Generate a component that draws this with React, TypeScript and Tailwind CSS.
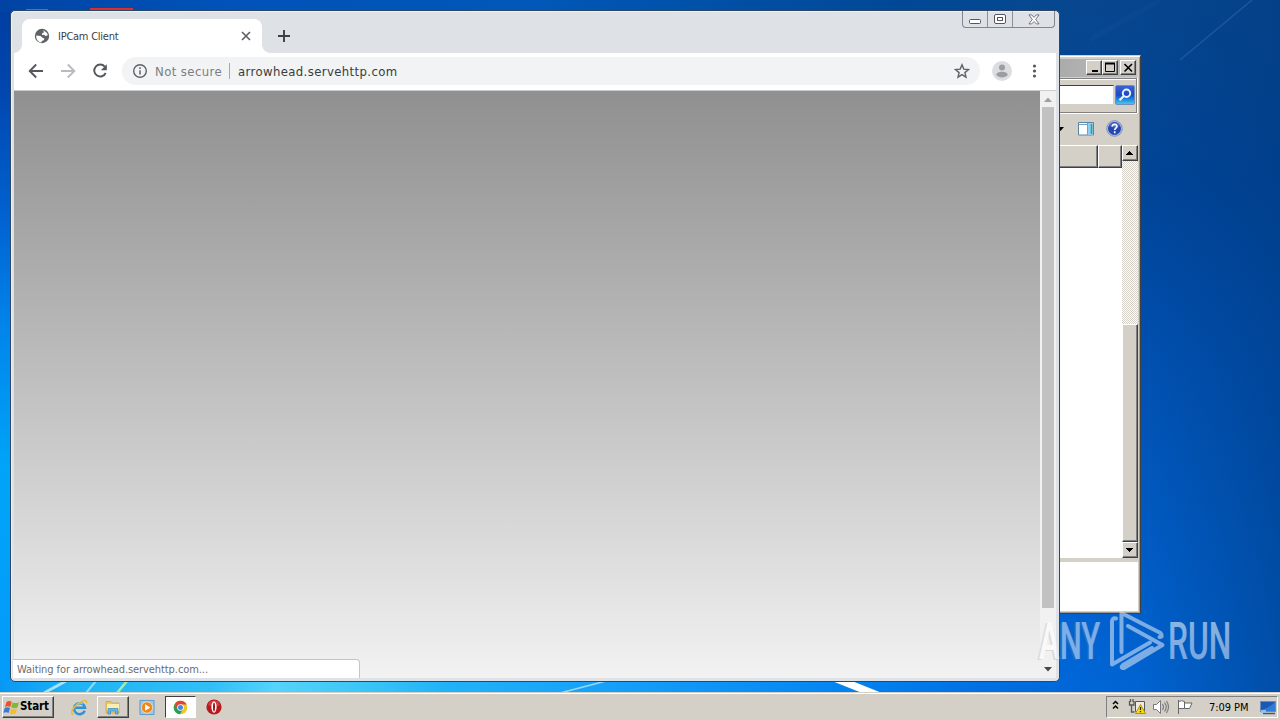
import type { ReactNode } from 'react';

const RAISED =
  'border border-t-white border-l-white border-r-[#404040] border-b-[#404040] bg-[#d4d0c8] shadow-[inset_-1px_-1px_0_#808080]';

function Wallpaper() {
  return (
    <svg className="absolute inset-0" width="1280" height="720" viewBox="0 0 1280 720">
      <defs>
        <linearGradient id="leftEdge" x1="0" y1="0" x2="0" y2="1">
          <stop offset="0" stopColor="#003da0" />
          <stop offset="0.12" stopColor="#0046ae" />
          <stop offset="0.3" stopColor="#0062d0" />
          <stop offset="0.45" stopColor="#0084ea" />
          <stop offset="0.65" stopColor="#00a4f8" />
          <stop offset="1" stopColor="#0499fa" />
        </linearGradient>
        <linearGradient id="topEdge" x1="0" y1="0" x2="1" y2="0">
          <stop offset="0" stopColor="#0043a4" />
          <stop offset="0.2" stopColor="#0052b8" />
          <stop offset="0.5" stopColor="#0058b8" />
          <stop offset="0.85" stopColor="#004896" />
          <stop offset="1" stopColor="#07478f" />
        </linearGradient>
        <linearGradient id="rightEdge" x1="0" y1="0" x2="0" y2="1">
          <stop offset="0" stopColor="#07478f" />
          <stop offset="0.25" stopColor="#00459a" />
          <stop offset="0.5" stopColor="#0053b6" />
          <stop offset="0.75" stopColor="#005fcb" />
          <stop offset="1" stopColor="#0069dc" />
        </linearGradient>
        <linearGradient id="rightShade" x1="0" y1="0" x2="1" y2="0">
          <stop offset="0" stopColor="#003a80" stopOpacity="0" />
          <stop offset="0.35" stopColor="#003a80" stopOpacity="0.08" />
          <stop offset="1" stopColor="#003a80" stopOpacity="0.55" />
        </linearGradient>
        <linearGradient id="bottomEdge" x1="0" y1="0" x2="1" y2="0">
          <stop offset="0" stopColor="#0898f4" />
          <stop offset="0.07" stopColor="#1fb4f4" />
          <stop offset="0.2" stopColor="#32bff8" />
          <stop offset="0.26" stopColor="#55d3fb" />
          <stop offset="0.34" stopColor="#3cc6f6" />
          <stop offset="0.42" stopColor="#22b2f8" />
          <stop offset="0.6" stopColor="#149df8" />
          <stop offset="0.78" stopColor="#0586f2" />
          <stop offset="0.9" stopColor="#0074e6" />
          <stop offset="1" stopColor="#0068da" />
        </linearGradient>
      </defs>
      <rect width="600" height="720" fill="url(#leftEdge)" />
      <rect x="600" width="680" height="720" fill="url(#rightEdge)" />
      <rect x="1060" width="220" height="720" fill="url(#rightShade)" />
      <rect width="1060" height="12" fill="url(#topEdge)" />
      <rect y="681" width="1060" height="12" fill="url(#bottomEdge)" />
      <path d="M1180 60L1252 0" stroke="#6ba0d0" strokeWidth="1.6" opacity="0.22" />
      <path d="M1090 40L1160 0" stroke="#4c86c4" strokeWidth="5" opacity="0.05" />
      <path d="M44 693L66 681" stroke="#c8f0ff" strokeWidth="3" opacity="0.8" />
      <path d="M86 693L96 681" stroke="#a0e8f8" strokeWidth="2" opacity="0.8" />
      <path d="M117 693L127 681" stroke="#b8f0a0" strokeWidth="2.5" opacity="0.9" />
      <path d="M560 693L606 681" stroke="#b8e6ff" strokeWidth="1.5" opacity="0.8" />
      <path d="M832 681h20l30 12h-20z" fill="#fff" />
      {/* desktop shortcuts peeking out above the browser */}
      <path d="M90 8h43v3H90z" fill="#d8302c" />
      <path d="M26 9.500h22v2H26z" fill="#8fa6cc" />
    </svg>
  );
}

function ArrowButton({ up }: { up?: boolean }) {
  return (
    <div className={`flex h-4 w-4 shrink-0 items-center justify-center pr-px ${RAISED}`}>
      <svg width="7" height="4" viewBox="0 0 7 4" shapeRendering="crispEdges">
        <path d={up ? 'M3 0h1v1h1v1h1v1h1v1H0V3h1V2h1V1h1z' : 'M0 0h7v1H6v1H5v1H4v1H3V3H2V2H1V1H0z'} />
      </svg>
    </div>
  );
}

function TitleButton({ children }: { children: ReactNode }) {
  return (
    <div className={`flex h-[15px] w-4 items-center justify-center pb-px pr-px ${RAISED}`}>
      <svg width="12" height="11" viewBox="0 0 12 11" fill="none" stroke="#000">
        {children}
      </svg>
    </div>
  );
}

function ExplorerWindow() {
  return (
    <div className="absolute left-[900px] top-[55px] flex h-[559px] w-[241px] flex-col border border-b-[#404040] border-l-[#d4d0c8] border-r-[#404040] border-t-[#d4d0c8] bg-[#d4d0c8] pb-[2px] pr-[2px] pt-[3px] shadow-[inset_0_1px_0_#fff,inset_-1px_-1px_0_#a09c94]">
      <div className="mr-px flex h-[18px] shrink-0 items-center justify-end bg-gradient-to-r from-[#808080] to-[#c0c0c0] pb-px pr-[1px]">
        <TitleButton><path d="M4 9h6" strokeWidth="2" /></TitleButton>
        <TitleButton>
          <path d="M1.500 1v8.500h9V1" />
          <path d="M1 1.500h10" strokeWidth="2" />
        </TitleButton>
        <div className="w-[2px]" />
        <TitleButton><path d="M2.500 2l7.500 7.500M10 2l-7.500 7.500" strokeWidth="1.600" /></TitleButton>
      </div>
      <div className="mr-px mt-[1px] flex h-[35px] shrink-0 items-center justify-end gap-px border border-[#808080] pb-px pr-[1px] shadow-[inset_0_1px_0_#fff,0_1px_0_#fff,1px_0_0_#fff]">
        <div className="h-[20px] w-[140px] border border-b-[#d4d0c8] border-l-[#808080] border-r-[#d4d0c8] border-t-[#404040] bg-white" />
        <div className="flex h-[20px] w-[20px] items-center justify-center rounded-[2px] border border-[#6f8fb8] bg-gradient-to-b from-[#3a62d8] via-[#1b48c4] to-[#42c8f0]">
          <svg width="16" height="16" viewBox="0 0 16 16" fill="none" stroke="#e8f2ff">
            <circle cx="9.500" cy="6.300" r="3.700" strokeWidth="2" />
            <path d="M6.800 9L2.500 13.300" strokeWidth="2.200" />
          </svg>
        </div>
      </div>
      <div className="flex h-[32px] shrink-0 items-center justify-end pb-px pr-[15px]">
        <svg width="7" height="4" viewBox="0 0 7 4"><path d="M0 0h7L3.500 4z" /></svg>
        <svg className="ml-[14px]" width="17" height="15" viewBox="0 0 17 15">
          <path d="M.5 1.500h15v12.500H.5z" fill="#fff" stroke="#5a84a4" />
          <path d="M1 3.500h9M9.500 2v12" stroke="#78a0bc" />
          <path d="M10 2h5v11.500h-5z" fill="#8cd0ea" />
          <path d="M13.500 3v10" stroke="#3b93b8" strokeWidth="1.500" />
        </svg>
        <svg className="ml-[11px]" width="17" height="17" viewBox="0 0 17 17">
          <circle cx="8.500" cy="8.500" r="7.800" fill="#b4bfdd" stroke="#7684ae" strokeWidth=".8" />
          <circle cx="8.500" cy="8.500" r="6.500" fill="#2446ae" />
          <path d="M3 6a6.200 6.200 0 0 1 11 0q-5.500 3-11 0z" fill="#5c7cd4" opacity=".7" />
          <path d="M6.300 6.600C6.300 3.400 11 3.700 10.900 6.400C10.800 8.200 8.700 8 8.700 10.100M8.700 11.300v1.900" fill="none" stroke="#fff" strokeWidth="1.700" />
        </svg>
      </div>
      <div className="flex h-[413px] shrink-0">
        <div className="flex flex-1 flex-col bg-white">
          <div className="flex h-[23px]">
            <div className={`flex-1 ${RAISED}`} />
            <div className={`w-[24px] ${RAISED}`} />
          </div>
        </div>
        <div className="flex w-4 flex-col">
          <ArrowButton up />
          <div className="flex-1 bg-[repeating-conic-gradient(#d4d0c8_0_25%,#ffffff_0_50%)] bg-[length:2px_2px]" />
          <div className={`h-[218px] ${RAISED}`} />
          <ArrowButton />
        </div>
      </div>
      <div className="mt-[4px] flex-1 bg-white" />
    </div>
  );
}

function CaptionButtons() {
  return (
    <div className="absolute right-[4px] top-0 flex h-[17px] w-[93px] divide-x divide-[#8b9099] rounded-b-[4px] border border-t-0 border-[#80858f]">
      <div className="flex w-[25px] items-center justify-center">
        <svg width="12" height="12" viewBox="0 0 12 12">
          <rect x=".5" y="6.500" width="11" height="4" rx="1" fill="#fff" stroke="#54575f" />
        </svg>
      </div>
      <div className="flex w-[25px] items-center justify-center">
        <svg width="12" height="11" viewBox="0 0 12 11" fill="#fff" stroke="#54575f">
          <rect x=".5" y=".5" width="11" height="9" rx="1.500" />
          <rect x="3.500" y="3.500" width="5" height="3" />
        </svg>
      </div>
      <div className="flex flex-1 items-center justify-center">
        <svg width="12" height="11" viewBox="0 0 13 12">
          <path d="M1 1h3l2.500 2.700L9 1h3L8.300 6L12 10.800H9L6.500 8.200L4 10.800H1L4.700 6z" fill="#fff" stroke="#666a72" />
        </svg>
      </div>
    </div>
  );
}

function TabStrip() {
  return (
    <div className="flex h-[42px] shrink-0 items-end">
      <div className="h-[8px] w-[8px] bg-[radial-gradient(circle_at_0_0,transparent_7.500px,#ffffff_8px)]" />
      <div className="flex h-[34px] w-[240px] items-center rounded-t-[8px] bg-white pl-[12px] pr-[10px]">
        <svg width="16" height="16" viewBox="0 0 16 16">
          <circle cx="8" cy="8" r="7.200" fill="#5f6368" />
          <path d="M9.300 2.200L13 5l.8 2.300-2.300.8-1.500-1.300-2.100.2.300-1.700 1.700-.9z" fill="#fff" />
          <path d="M2.200 7.500l4.300.6 2 1.600 1.900.7-.7 1.900-1.800.8-.6 1.300c-3.300-.3-5.300-3.300-5.100-6.900z" fill="#fff" />
        </svg>
        <span className="ml-[8px] text-[11px] tracking-[-0.25px] text-[#3c4043]">IPCam Client</span>
        <svg className="ml-auto" width="12" height="12" viewBox="0 0 12 12">
          <path d="M2 2l8 8M10 2l-8 8" stroke="#5f6368" strokeWidth="1.700" />
        </svg>
      </div>
      <div className="h-[8px] w-[8px] bg-[radial-gradient(circle_at_100%_0,transparent_7.500px,#ffffff_8px)]" />
      <svg className="mb-[10px] ml-[7px]" width="14" height="14" viewBox="0 0 14 14">
        <path d="M7 1v12M1 7h12" stroke="#3c4043" strokeWidth="1.900" />
      </svg>
    </div>
  );
}

function Toolbar() {
  return (
    <div className="flex h-[37px] shrink-0 items-center bg-white pb-px pl-[12px]">
      <svg width="84" height="20" viewBox="0 0 84 20" fill="none" strokeWidth="1.900">
        <path d="M17 10H4M10.200 3.500L3.700 10l6.500 6.500" stroke="#55585d" />
        <path d="M35 10h13M41.800 3.500l6.500 6.500-6.500 6.500" stroke="#b9bbbe" />
        <path d="M78.800 5.600A6 6 0 1 0 79.700 12" stroke="#55585d" />
        <path d="M80.800 3.300v6h-6z" fill="#55585d" />
      </svg>
      <div className="ml-[12px] flex h-[28px] w-[858px] items-center rounded-full bg-[#f1f3f4] pl-[10px] pr-[10px]">
        <svg width="16" height="16" viewBox="0 0 16 16" fill="none" stroke="#5f6368">
          <circle cx="8" cy="8" r="6.300" strokeWidth="1.400" />
          <path d="M8 7.200v4.300M8 4.300v1.600" strokeWidth="1.500" />
        </svg>
        <span className="ml-[7px] w-[67px] whitespace-nowrap text-[13px] tracking-[0.4px] text-[#7a7e83]">Not secure</span>
        <span className="ml-[7px] h-[16px] w-px bg-[#a4a8ad]" />
        <span className="ml-[8px] whitespace-nowrap text-[13px] tracking-[0.38px] text-[#3a3c3f]">arrowhead.servehttp.com</span>
        <svg className="ml-auto" width="16" height="16" viewBox="0 0 16 16">
          <path d="M8 1.800l1.800 4.300 4.700.4-3.600 3.100 1.100 4.600L8 11.700l-4 2.500 1.100-4.600-3.600-3.100 4.700-.4z" fill="none" stroke="#5f6368" strokeWidth="1.400" />
        </svg>
      </div>
      <svg className="ml-[12px]" width="20" height="20" viewBox="0 0 20 20">
        <circle cx="10" cy="10" r="10" fill="#dcdddf" />
        <circle cx="10" cy="6.500" r="3" fill="#9b9da0" />
        <path d="M4.300 14c0-4.200 11.400-4.200 11.400 0-2.200 3.200-9.200 3.200-11.400 0z" fill="#9b9da0" />
      </svg>
      <svg className="ml-[20px]" width="5" height="16" viewBox="0 0 5 16" fill="#55585d">
        <circle cx="2.500" cy="3" r="1.600" />
        <circle cx="2.500" cy="8" r="1.600" />
        <circle cx="2.500" cy="13" r="1.600" />
      </svg>
    </div>
  );
}

function BrowserWindow() {
  return (
    <div className="absolute left-[10px] top-[10px] flex h-[672px] w-[1050px] flex-col rounded-[5px] border border-[#2c4868] bg-[#dee1e6] px-[3px] pb-[3px] shadow-[inset_1px_1px_0_#eef0f3]">
      <TabStrip />
      <CaptionButtons />
      <Toolbar />
      <div className="h-px shrink-0 bg-[#c9cbce]" />
      <div className="flex min-h-0 flex-1">
        <div className="flex flex-1 items-end bg-gradient-to-b from-[#909090] to-[#f2f2f2]">
          <div className="-ml-px flex h-[19px] w-[347px] items-center rounded-tr-[4px] border border-b-0 border-l-0 border-[#c4c6c8] bg-white pl-[4px] text-[11px] tracking-[-0.08px] text-[#6a6d71]">
            Waiting for arrowhead.servehttp.com...
          </div>
        </div>
        <div className="flex w-[16px] flex-col items-center bg-[#f1f1f1]">
          <svg className="mt-[6px] shrink-0" width="8" height="5" viewBox="0 0 8 5"><path d="M0 5L4 0.500L8 5z" fill="#a0a0a0" /></svg>
          <div className="mt-[5px] h-[501px] w-[12px] shrink-0 bg-[#c1c1c1]" />
          <svg className="mb-[6px] mt-auto" width="8" height="5" viewBox="0 0 8 5"><path d="M0 0h8L4 4.500z" fill="#484848" /></svg>
        </div>
      </div>
    </div>
  );
}

function Watermark() {
  return (
    <svg className="absolute left-[1030px] top-[600px] opacity-60" width="210" height="90" viewBox="0 0 210 90">
      <defs>
        <linearGradient id="mark" x1="0" y1="0" x2="0" y2="1">
          <stop offset="0" stopColor="#f0f5fc" />
          <stop offset="1" stopColor="#bcd6f6" />
        </linearGradient>
        <linearGradient id="markFirst" x1="0" y1="0" x2="1" y2="0">
          <stop offset="0.27" stopColor="#ffffff" />
          <stop offset="0.34" stopColor="#cfe0f6" />
        </linearGradient>
      </defs>
      <g className="font-['Roboto','Liberation_Sans',sans-serif]" fontSize="51" fontWeight="500">
        <g transform="translate(9 59) scale(0.620 1)">
          <text x="-3" y="1" fill="#888" opacity="0.35" textLength="99" lengthAdjust="spacingAndGlyphs">ANY</text>
          <text x="0" y="0" fill="url(#markFirst)" textLength="99" lengthAdjust="spacingAndGlyphs">ANY</text>
        </g>
        <g transform="translate(138 59) scale(0.620 1)">
          <text x="0" y="0" fill="url(#mark)" textLength="102" lengthAdjust="spacingAndGlyphs">RUN</text>
        </g>
      </g>
      <g fill="none" stroke="#cfe0f6" strokeWidth="4" strokeLinejoin="round" strokeLinecap="round">
        <path d="M86 18.500q-4-1-4 4v42l38-22" />
        <path d="M91.500 52V13l39 20q3 4-1 4" />
        <path d="M98 26l34.500 19-38.500 23q-4 0-1-3l29-17" />
      </g>
    </svg>
  );
}

function StartButton() {
  return (
    <div className={`flex h-[22px] w-[52px] items-center ${RAISED}`}>
      <svg width="17" height="17" viewBox="0 0 17 17">
        <path d="M3.500 3Q6 1 8.700 2.800L7.300 8Q4.800 6.500 2 8z" fill="#e6532c" />
        <path d="M9.500 3.200Q12.300 5 16 3.200L14.500 8.500Q11 10 8.200 8.200z" fill="#7fb93a" />
        <path d="M1.700 9Q4.500 7.500 7 9L5.600 14Q3 12.500 .3 14z" fill="#3a7cd0" />
        <path d="M8 9.300Q11 11 14.200 9.500L12.800 14.500Q9.700 16 6.600 14.400z" fill="#f6be2c" />
      </svg>
      <span className="text-[11.5px] font-bold tracking-[-0.1px] text-black">Start</span>
    </div>
  );
}

function TrayIcons() {
  return (
    <svg width="82" height="20" viewBox="0 0 82 20" fill="none">
      <path d="M2 7l2.500-2.500L7 7M2 11.500L4.500 9 7 11.500" stroke="#000" strokeWidth="1.500" />
      <path d="M18.500 4v4h4.500V4M20.500 8v7h3M19.500 2v3M22 2v3" stroke="#55585c" strokeWidth="1.300" />
      <path d="M24.500 4.500h9v10h-9z" fill="#eceae4" stroke="#55585c" />
      <path d="M29.500 7.500l5 9h-10z" fill="#f8d820" stroke="#b89010" />
      <path d="M29.500 10v3M29.500 14v1.300" stroke="#222" strokeWidth="1.200" />
      <path d="M42.500 7.500h3l4-4v13l-4-4h-3z" fill="#fff" stroke="#77797c" />
      <path d="M51.500 7q2 3 0 6M53.500 5.500q3.500 4.500 0 9M55.500 4q4 6 0 12" stroke="#77797c" strokeWidth="1.100" />
      <path d="M67.500 3v14M67.500 4.500q3-1.500 6 0v7h-6zM73.500 6h7.500l-2.500 5.500h-5" fill="#fff" stroke="#66686b" />
    </svg>
  );
}

function Taskbar() {
  return (
    <div className="relative mt-auto flex h-[28px] shrink-0 items-center border-t border-[#d4d0c8] bg-[#d4d0c8] pl-[2px] pr-[2px] pt-px shadow-[inset_0_1px_0_#fff]">
      <StartButton />
      <svg className="ml-[17px]" width="17" height="17" viewBox="0 0 17 17" fill="none">
        <path d="M13.700 11.700A5.500 5.500 0 1 1 14 8.700H4.500" stroke="#2f91d8" strokeWidth="2.500" />
        <path d="M5 5.500Q8 2.300 12 5" stroke="#8bd0f4" />
        <path d="M2.500 15Q-.5 16 1.300 11.300Q4 6 10 3Q16-.5 15.800 4" stroke="#e8b936" strokeWidth="1.500" />
      </svg>
      <div className={`ml-[9px] flex h-[22px] w-[32px] items-center justify-center ${RAISED}`}>
        <svg width="16" height="16" viewBox="0 0 16 16">
          <path d="M1 2.500h5l1 1.500h7v10H1z" fill="#ecc95c" stroke="#c9a040" strokeWidth=".7" />
          <path d="M2 5h12v7H2z" fill="#fbeeb0" />
          <path d="M3 15V9.500h10V15h-2.500v-3h-5v3z" fill="#66b6e8" stroke="#3c88c0" strokeWidth=".7" />
        </svg>
      </div>
      <svg className="ml-[10px]" width="16" height="17" viewBox="0 0 17 17">
        <path d="M1 1h15v15H1z" fill="#9dc7e8" stroke="#5d98c6" />
        <circle cx="8.500" cy="8.500" r="6" fill="#f08818" stroke="#fff" strokeWidth=".6" />
        <path d="M6.500 5v7l5.500-3.500z" fill="#fff" />
      </svg>
      <div className="ml-[10px] flex h-[22px] w-[31px] items-center justify-center border border-b-white border-l-[#404040] border-r-white border-t-[#404040] bg-white">
        <svg width="15" height="15" viewBox="0 0 16 16">
          <circle cx="8" cy="8" r="7.300" fill="#f2c625" />
          <path d="M1.700 4.400A7.300 7.300 0 0 1 14.500 4.700H8L5 10z" fill="#dc4637" />
          <path d="M1.700 4.400A7.300 7.300 0 0 0 7.500 15.200L10.800 9.700 5 9.700z" fill="#2a9d58" />
          <circle cx="8" cy="8" r="3.500" fill="#fff" />
          <circle cx="8" cy="8" r="2.700" fill="#4a86e8" />
        </svg>
      </div>
      <svg className="ml-[10px]" width="16" height="16" viewBox="0 0 16 16">
        <circle cx="8" cy="8" r="7.600" fill="#b41a1e" />
        <path d="M2 6a6.300 6.300 0 0 1 12 0q-6 3-12 0z" fill="#d8504c" opacity=".7" />
        <ellipse cx="8" cy="8" rx="2.600" ry="5.700" fill="#fff" />
        <ellipse cx="8" cy="8" rx="1" ry="4.500" fill="#a01418" />
      </svg>
      <div className="ml-auto flex h-[22px] w-[172px] items-center border border-b-white border-l-[#808080] border-r-white border-t-[#808080] pl-[4px]">
        <TrayIcons />
        <span className="ml-[16px] w-[41px] whitespace-nowrap text-[11px] tracking-[-0.05px] text-black">7:09 PM</span>
        <svg className="ml-[10px]" width="17" height="15" viewBox="0 0 17 15">
          <path d="M.5 1.500h15v10H.5z" fill="#1c58b8" stroke="#6a8cb4" />
          <path d="M1 10Q8 9 15 2v9H1z" fill="#2f7cd8" />
          <path d="M3 13.500h12" stroke="#3a5c8c" strokeWidth="1.500" />
          <path d="M1 10h5v3H1z" fill="#8cc0ec" />
        </svg>
      </div>
    </div>
  );
}

export default function App() {
  return (
    <div className="relative flex h-[720px] w-[1280px] flex-col overflow-hidden font-['DejaVu_Sans_Condensed','DejaVu_Sans',sans-serif] leading-none">
      <Wallpaper />
      <ExplorerWindow />
      <BrowserWindow />
      <Watermark />
      <Taskbar />
    </div>
  );
}
